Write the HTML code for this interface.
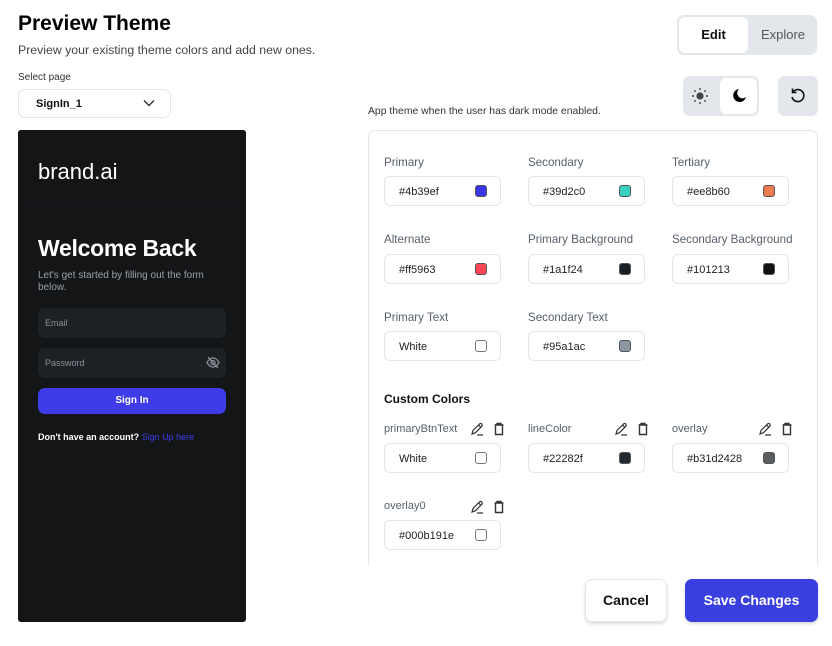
<!DOCTYPE html>
<html><head><style>
*{box-sizing:border-box;margin:0;padding:0}
body{width:832px;height:638px;background:#fff;font-family:"Liberation Sans",sans-serif;position:relative;overflow:hidden;color:#111}
.a{position:absolute}
.lbl{font-size:11.6px;color:#57606a}
.inp{position:absolute;width:117px;height:30px;border:1px solid #e3e6ea;border-radius:6px;font-size:11px;color:#222;padding:9px 0 0 14px}
.sw{position:absolute;right:13px;top:8px;width:12px;height:12px;border-radius:3px;border:1px solid #555}
.ic{position:absolute}
</style></head><body>
<div class="a" style="left:18px;top:12px;font-size:21px;font-weight:bold;color:#000">Preview Theme</div>
<div class="a" style="left:18px;top:43px;font-size:12.3px;color:#444">Preview your existing theme colors and add new ones.</div>
<div class="a" style="left:18px;top:72px;font-size:10px;color:#333">Select page</div>
<div class="a" style="left:18px;top:89px;width:153px;height:29px;border:1px solid #e3e6ea;border-radius:7px;font-size:11px;font-weight:bold;padding:8px 0 0 17px">SignIn_1
<svg class="ic" style="left:124px;top:9px" width="12" height="8" viewBox="0 0 12 8"><path d="M1 1.5l5 5 5-5" fill="none" stroke="#333" stroke-width="1.4"/></svg></div>

<div class="a" style="left:18px;top:130px;width:228px;height:492px;background:#141517;border-radius:3px;overflow:hidden">
 <div class="a" style="left:0;top:0;width:228px;height:77px;background:#141517;border-bottom:1px solid #18191c"></div>
 <div class="a" style="left:20px;top:29px;font-size:22px;color:#fff">brand.ai</div>
 <div class="a" style="left:20px;top:105px;font-size:23px;font-weight:bold;color:#fff;letter-spacing:-0.3px">Welcome Back</div>
 <div class="a" style="left:20px;top:140px;width:190px;font-size:10px;line-height:12px;color:#9aa0a8">Let's get started by filling out the form below.</div>
 <div class="a" style="left:20px;top:178px;width:188px;height:30px;background:#1d2024;border-radius:7px;font-size:9px;color:#8b9098;padding:10px 0 0 7px">Email</div>
 <div class="a" style="left:20px;top:218px;width:188px;height:30px;background:#1d2024;border-radius:7px;font-size:9px;color:#8b9098;padding:10px 0 0 7px">Password
  <svg class="ic" style="left:168px;top:8px" width="14" height="13" viewBox="0 0 14 13"><path d="M1 6.5C3 3 5 2 7 2s4 1 6 4.5C11 10 9 11 7 11S3 10 1 6.5z" fill="none" stroke="#8b9098" stroke-width="1.3"/><circle cx="7" cy="6.5" r="2" fill="none" stroke="#8b9098" stroke-width="1.2"/><path d="M2 1l10 11" stroke="#8b9098" stroke-width="1.3"/></svg></div>
 <div class="a" style="left:20px;top:258px;width:188px;height:26px;background:#3d3ce8;border-radius:7px;font-size:10px;font-weight:bold;color:#fff;text-align:center;line-height:26px">Sign In</div>
 <div class="a" style="left:20px;top:302px;font-size:9px;font-weight:bold;color:#fff">Don't have an account? <span style="color:#3d3ce8;font-weight:normal">Sign Up here</span></div>
</div>

<div class="a" style="left:677px;top:15px;width:140px;height:40px;background:#e3e6ea;border-radius:7px"></div>
<div class="a" style="left:679px;top:17px;width:69px;height:36px;background:#fff;border-radius:6px;font-size:13px;font-weight:bold;text-align:center;line-height:36px">Edit</div>
<div class="a" style="left:750px;top:17px;width:66px;height:36px;font-size:13px;color:#555;text-align:center;line-height:36px">Explore</div>

<div class="a" style="left:683px;top:76px;width:76px;height:40px;background:#e3e6ea;border-radius:7px"></div>
<div class="a" style="left:720px;top:78px;width:37px;height:36px;background:#fff;border-radius:6px"></div>
<svg class="ic" style="left:691px;top:87px" width="18" height="18" viewBox="0 0 18 18"><circle cx="9" cy="9" r="3.6" fill="#444"/><g stroke="#444" stroke-width="1.4"><path d="M9 1v2M9 15v2M1 9h2M15 9h2M3.3 3.3l1.4 1.4M13.3 13.3l1.4 1.4M3.3 14.7l1.4-1.4M13.3 4.7l1.4-1.4"/></g></svg>
<svg class="ic" style="left:730px;top:87px" width="18" height="18" viewBox="0 0 18 18"><path d="M9 2a6.5 6.5 0 1 0 7 8A5 5 0 0 1 9 2z" fill="#000"/></svg>
<div class="a" style="left:778px;top:76px;width:40px;height:40px;background:#e3e6ea;border-radius:7px"></div>
<svg class="ic" style="left:788px;top:86px" width="20" height="20" viewBox="0 0 20 20"><path d="M5 6A6 6 0 1 1 4 11" fill="none" stroke="#111" stroke-width="1.6"/><path d="M4.5 2.5V6.5H8.5" fill="none" stroke="#111" stroke-width="1.6"/></svg>

<div class="a" style="left:368px;top:106px;font-size:10.4px;color:#333">App theme when the user has dark mode enabled.</div>
<div class="a" style="left:368px;top:130px;width:450px;height:460px;border:1px solid #e3e6ea;border-radius:7px"></div>
<div class="a" style="left:360px;top:566px;width:472px;height:80px;background:#fff"></div>

<div class="a lbl" style="left:384px;top:156px">Primary</div>
<div class="a lbl" style="left:528px;top:156px">Secondary</div>
<div class="a lbl" style="left:672px;top:156px">Tertiary</div>
<div class="inp" style="left:384px;top:176px">#4b39ef<div class="sw" style="background:#3b34e8"></div></div>
<div class="inp" style="left:528px;top:176px">#39d2c0<div class="sw" style="background:#39d2c0"></div></div>
<div class="inp" style="left:672px;top:176px">#ee8b60<div class="sw" style="background:#ee7b50"></div></div>

<div class="a lbl" style="left:384px;top:233px">Alternate</div>
<div class="a lbl" style="left:528px;top:233px">Primary Background</div>
<div class="a lbl" style="left:672px;top:233px">Secondary Background</div>
<div class="inp" style="left:384px;top:254px">#ff5963<div class="sw" style="background:#ff4455"></div></div>
<div class="inp" style="left:528px;top:254px">#1a1f24<div class="sw" style="background:#1a1f24"></div></div>
<div class="inp" style="left:672px;top:254px">#101213<div class="sw" style="background:#101213"></div></div>

<div class="a lbl" style="left:384px;top:311px">Primary Text</div>
<div class="a lbl" style="left:528px;top:311px">Secondary Text</div>
<div class="inp" style="left:384px;top:331px">White<div class="sw" style="background:#fff;border-color:#777"></div></div>
<div class="inp" style="left:528px;top:331px">#95a1ac<div class="sw" style="background:#8a96a2"></div></div>

<div class="a" style="left:384px;top:392px;font-size:12px;font-weight:bold">Custom Colors</div>

<div class="a lbl" style="left:384px;top:423px;font-size:11px">primaryBtnText</div>
<div class="a lbl" style="left:528px;top:423px;font-size:11px">lineColor</div>
<div class="a lbl" style="left:672px;top:423px;font-size:11px">overlay</div>
<div class="a lbl" style="left:384px;top:500px;font-size:11px">overlay0</div>

<svg width="0" height="0" style="position:absolute"><defs>
<g id="ed"><path d="M2 12l1-3.5 6.5-6.5a1.6 1.6 0 0 1 2.3 2.3L5.3 10.8z M8.5 3l2.3 2.3 M7 13h6" fill="none" stroke="#333" stroke-width="1.2"/></g>
<g id="tr"><path d="M1.5 3h9M4 3V1.5h4V3M2.5 3.5v9h7v-9" fill="none" stroke="#333" stroke-width="1.4"/></g>
</defs></svg>
<svg class="ic" style="left:470px;top:422px" width="14" height="14"><use href="#ed"/></svg><svg class="ic" style="left:493px;top:422px" width="12" height="14"><use href="#tr"/></svg>
<svg class="ic" style="left:614px;top:422px" width="14" height="14"><use href="#ed"/></svg><svg class="ic" style="left:637px;top:422px" width="12" height="14"><use href="#tr"/></svg>
<svg class="ic" style="left:758px;top:422px" width="14" height="14"><use href="#ed"/></svg><svg class="ic" style="left:781px;top:422px" width="12" height="14"><use href="#tr"/></svg>
<svg class="ic" style="left:470px;top:500px" width="14" height="14"><use href="#ed"/></svg><svg class="ic" style="left:493px;top:500px" width="12" height="14"><use href="#tr"/></svg>

<div class="inp" style="left:384px;top:443px">White<div class="sw" style="background:#fff;border-color:#777"></div></div>
<div class="inp" style="left:528px;top:443px">#22282f<div class="sw" style="background:#22282f"></div></div>
<div class="inp" style="left:672px;top:443px">#b31d2428<div class="sw" style="background:#5a5d60"></div></div>
<div class="inp" style="left:384px;top:520px">#000b191e<div class="sw" style="background:#fff;border-color:#777"></div></div>

<div class="a" style="left:585px;top:579px;width:82px;height:43px;border:1px solid #e3e6ea;border-radius:7px;box-shadow:0 2px 3px rgba(0,0,0,.15);font-size:14px;font-weight:bold;text-align:center;line-height:41px">Cancel</div>
<div class="a" style="left:685px;top:579px;width:133px;height:43px;background:#3a3fe0;border-radius:7px;box-shadow:0 2px 3px rgba(0,0,0,.15);font-size:14px;font-weight:bold;color:#fff;text-align:center;line-height:43px">Save Changes</div>
</body></html>
